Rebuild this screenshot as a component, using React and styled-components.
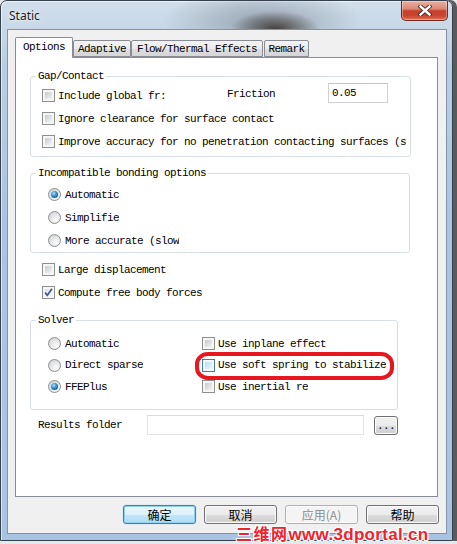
import React from "react";
import styled, { createGlobalStyle } from "styled-components";

const MONO = `"Liberation Mono", "Courier New", monospace`;
const CJK = `"Noto Sans CJK SC", "Noto Sans", sans-serif`;

const GlobalStyle = createGlobalStyle`
  html, body {
    margin: 0;
    padding: 0;
  }
  body {
    width: 457px;
    height: 544px;
    overflow: hidden;
    background: #e6e9ec;
  }
`;

const Screen = styled.div`
  position: relative;
  width: 457px;
  height: 544px;
`;

const Window = styled.div`
  box-sizing: border-box;
  width: 453px;
  height: 541px;
  border: 1px solid #36414e;
  border-radius: 7px 7px 0 0;
  background: linear-gradient(180deg, #d2dfeb 0%, #b9cee3 12%, #a9c5e3 40%, #a8c4e2 100%);
  padding: 0 5px 6px 6px;
  box-shadow: 4px 0 0 #5a5a5a, inset 1px 1px 0 rgba(255, 255, 255, 0.6);
  display: flex;
  flex-direction: column;
`;

const TitleBar = styled.div`
  height: 28px;
  display: flex;
  align-items: flex-start;
  background: radial-gradient(ellipse 45px 18px at 61% 100%, rgba(60, 52, 46, 0.9), rgba(60, 52, 46, 0) 100%),
    radial-gradient(ellipse 100px 32px at 58% 70%, rgba(100, 110, 122, 0.5), rgba(100, 110, 122, 0) 100%);
`;

const Title = styled.span`
  margin: 7px 0 0 2px;
  font-family: "Noto Sans", "Liberation Sans", sans-serif;
  font-size: 12px;
  line-height: 16px;
  color: #1b1b1b;
  text-shadow: 0 0 6px rgba(255, 255, 255, 0.9), 0 0 2px rgba(255, 255, 255, 0.8);
`;

const CloseButton = styled.div`
  box-sizing: border-box;
  width: 47px;
  height: 20px;
  margin-left: auto;
  margin-right: -1px;
  border: 1px solid #6e2a22;
  border-top: none;
  border-radius: 0 0 5px 5px;
  background: linear-gradient(180deg, #eab0a2 0%, #dc8670 42%, #c6412b 52%, #c94530 78%, #de7452 100%);
  box-shadow: inset 0 0 0 1px rgba(255, 255, 255, 0.35);
  display: flex;
  align-items: center;
  justify-content: center;
`;

const Body = styled.div`
  box-sizing: border-box;
  flex: 1;
  border: 1px solid #8494a5;
  background: #f0f0f0;
  padding: 7px 7px 9px 7px;
  display: flex;
  flex-direction: column;
`;

const TabStrip = styled.div`
  position: relative;
  z-index: 1;
  height: 20px;
  display: flex;
  align-items: flex-end;
`;

const Tab = styled.div`
  box-sizing: border-box;
  width: ${(p) => p.$w}px;
  margin-left: ${(p) => p.$ml || 0}px;
  height: ${(p) => (p.$active ? 21 : 17)}px;
  margin-bottom: ${(p) => (p.$active ? -1 : 0)}px;
  border: 1px solid #898c95;
  border-bottom: ${(p) => (p.$active ? "none" : "1px solid #898c95")};
  border-radius: 2px 2px 0 0;
  background: ${(p) =>
    p.$active ? "#ffffff" : "linear-gradient(180deg, #f3f3f3 0%, #ebebeb 50%, #dddddd 51%, #d6d6d6 100%)"};
  display: flex;
  justify-content: center;
  padding-top: ${(p) => (p.$active ? 3 : 2)}px;
  font-family: ${MONO};
  font-size: 11px;
  letter-spacing: -0.6px;
  line-height: 13px;
  color: #000;
`;

const Panel = styled.div`
  position: relative;
  box-sizing: border-box;
  width: 423px;
  height: 440px;
  border: 1px solid #898c95;
  background: #ffffff;
  display: flex;
  flex-direction: column;
`;

const GroupBox = styled.fieldset`
  box-sizing: border-box;
  width: ${(p) => p.$w}px;
  margin: ${(p) => p.$mt}px 0 0 14px;
  padding: 0;
  border: 1px solid #d5dfe5;
  border-radius: 3px;
  min-inline-size: 0;
`;

const Legend = styled.legend`
  margin-left: 5px;
  padding: 0 2px;
  font-family: ${MONO};
  font-size: 11px;
  letter-spacing: -0.6px;
  line-height: 14px;
  color: #000;
`;

const GroupBody = styled.div`
  padding: ${(p) => p.$pad};
`;

const Row = styled.div`
  display: flex;
  align-items: center;
  height: ${(p) => p.$h || 23}px;
  gap: ${(p) => p.$gap ?? 3}px;
`;

const Label = styled.span`
  font-family: ${MONO};
  font-size: 11px;
  letter-spacing: -0.6px;
  line-height: 14px;
  color: ${(p) => p.$color || "#000"};
  white-space: nowrap;
  overflow: hidden;
  flex: none;
  ${(p) => (p.$w ? `width: ${p.$w}px;` : "")}
  ${(p) => (p.$clip ? `max-width: ${p.$clip}px;` : "")}
  ${(p) => (p.$mt ? `margin-top: ${p.$mt}px;` : "")}
`;

const CheckBox = styled.span`
  position: relative;
  box-sizing: border-box;
  flex: none;
  width: 13px;
  height: 13px;
  border: 1px solid ${(p) => (p.$hot ? "#3c7fb1" : "#8e8f8f")};
  background: #f6f6f6;
  &::after {
    content: "";
    position: absolute;
    inset: 2px;
    background: ${(p) =>
      p.$hot
        ? "linear-gradient(135deg, #b3dbf3 0%, #d3ebfa 55%, #eaf6fd 100%)"
        : p.$checked
        ? "linear-gradient(135deg, #dadcdf 0%, #eeeff0 55%, #fafafa 100%)"
        : "linear-gradient(135deg, #c6cacf 0%, #dfe1e3 55%, #f4f4f4 100%)"};
  }
  svg {
    position: absolute;
    left: 0;
    top: 0;
    z-index: 1;
  }
`;

const Radio = styled.span`
  position: relative;
  box-sizing: border-box;
  flex: none;
  width: 13px;
  height: 13px;
  border-radius: 50%;
  border: 1px solid #8e8f8f;
  background: radial-gradient(circle at 65% 70%, #fbfbfb 0%, #e6e7e9 45%, #c9ccd1 100%);
  &::after {
    content: "";
    display: ${(p) => (p.$on ? "block" : "none")};
    position: absolute;
    left: 2px;
    top: 2px;
    width: 7px;
    height: 7px;
    border-radius: 50%;
    background: radial-gradient(circle at 40% 35%, #a9e2fb 0%, #3b96d6 40%, #1c5a94 75%, #153c63 100%);
  }
`;

const TextBox = styled.div`
  box-sizing: border-box;
  flex: none;
  width: ${(p) => p.$w}px;
  height: 20px;
  border: 1px solid ${(p) => p.$border || "#cfd1d4"};
  border-top-color: ${(p) => p.$top || "#c2c4c8"};
  background: #fff;
  padding-left: 3px;
  display: flex;
  align-items: center;
  ${(p) => (p.$mt ? `margin-top: ${p.$mt}px;` : "")}
`;

const PlainRows = styled.div`
  margin-top: 5px;
  padding-left: 26px;
`;

const SolverGrid = styled.div`
  display: grid;
  grid-template-columns: 154px auto;
  grid-template-rows: 21px 22px 21px;
`;

const Highlight = styled.svg`
  position: absolute;
  left: 179px;
  top: 294px;
`;

const ResultsRow = styled.div`
  margin-top: 5px;
  padding-left: 22px;
  display: flex;
  align-items: center;
  height: 20px;
`;

const SmallButton = styled.div`
  box-sizing: border-box;
  flex: none;
  width: 24px;
  height: 19px;
  margin-left: 10px;
  margin-top: 1px;
  border: 1px solid #707070;
  border-radius: 3px;
  background: linear-gradient(180deg, #f2f2f2 0%, #ebebeb 50%, #dddddd 51%, #cfcfcf 100%);
  box-shadow: inset 0 0 0 1px #fcfcfc;
  display: flex;
  justify-content: center;
  padding-top: 3px;
  font-family: ${MONO};
  font-size: 11px;
  letter-spacing: -0.6px;
  line-height: 12px;
`;

const ButtonRow = styled.div`
  margin-top: 8px;
  display: flex;
  justify-content: flex-end;
  gap: 8px;
`;

const DialogButton = styled.div`
  box-sizing: border-box;
  width: 73px;
  height: 19px;
  border-radius: 3px;
  display: flex;
  align-items: center;
  justify-content: center;
  font-family: ${CJK};
  font-size: 12px;
  line-height: 17px;
  border: 1px solid ${(p) => (p.$default ? "#3c7fb1" : p.$disabled ? "#adb2b5" : "#707070")};
  color: ${(p) => (p.$disabled ? "#8d8d8d" : "#000")};
  background: ${(p) =>
    p.$default
      ? "linear-gradient(180deg, #ebf6fd 0%, #dcf1fc 50%, #c4e6f8 51%, #b0dbf3 100%)"
      : p.$disabled
      ? "#f4f4f4"
      : "linear-gradient(180deg, #f2f2f2 0%, #ebebeb 50%, #dddddd 51%, #cfcfcf 100%)"};
  box-shadow: ${(p) =>
    p.$default ? "inset 0 0 0 1px #8fd1f5, 0 0 1px #5fb3e8" : "inset 0 0 0 1px #fbfbfb"};
`;

const Watermark = styled.div`
  position: absolute;
  left: 236px;
  top: 526px;
  display: flex;
  align-items: baseline;
  color: #f0232c;
  font-weight: bold;
  white-space: nowrap;
  text-shadow: 1px 0 0 #fff, -1px 0 0 #fff, 0 1px 0 #fff, 0 -1px 0 #fff, 1px 1px 0 #fff,
    -1px -1px 0 #fff, 1px -1px 0 #fff, -1px 1px 0 #fff;
`;

const MarkCJK = styled.span`
  font-family: ${CJK};
  font-size: 16px;
  line-height: 14px;
  letter-spacing: 1.5px;
`;

const MarkLatin = styled.span`
  font-family: "Liberation Sans", Arial, sans-serif;
  font-size: 17px;
  line-height: 14px;
  letter-spacing: 0.3px;
`;

const CheckMark = () => (
  <svg width="11" height="11" viewBox="0 0 11 11">
    <path d="M2 5.5 L4.3 8.3 L9 1.8" fill="none" stroke="#3b5a9c" strokeWidth="1.7" />
  </svg>
);

const CheckItem = ({ children, checked, hot, ...rest }) => (
  <Row>
    <CheckBox $checked={checked} $hot={hot}>
      {checked && <CheckMark />}
    </CheckBox>
    <Label {...rest}>{children}</Label>
  </Row>
);

const RadioItem = ({ children, on, h, ...rest }) => (
  <Row $gap={4} $h={h}>
    <Radio $on={on} />
    <Label {...rest}>{children}</Label>
  </Row>
);

export default function App() {
  return (
    <Screen>
      <GlobalStyle />
      <Window>
        <TitleBar>
          <Title>Static</Title>
          <CloseButton>
            <svg width="14" height="11" viewBox="0 0 14 11">
              <path d="M2.5 1.5 L11.5 9.5 M11.5 1.5 L2.5 9.5" stroke="#3d2b28" strokeWidth="4.2" strokeLinecap="square" />
              <path d="M2.5 1.5 L11.5 9.5 M11.5 1.5 L2.5 9.5" stroke="#ffffff" strokeWidth="2.4" strokeLinecap="square" />
            </svg>
          </CloseButton>
        </TitleBar>
        <Body>
          <TabStrip>
            <Tab $active $w={58}>Options</Tab>
            <Tab $w={58}>Adaptive</Tab>
            <Tab $w={132}>Flow/Thermal Effects</Tab>
            <Tab $w={45} $ml={1}>Remark</Tab>
          </TabStrip>
          <Panel>
            <GroupBox $w={381} $mt={11}>
              <Legend>Gap/Contact</Legend>
              <GroupBody $pad="1px 0 3px 11px">
                <Row>
                  <CheckBox />
                  <Label $w={166}>Include global fr:</Label>
                  <Label $w={98} $mt={-3}>Friction</Label>
                  <TextBox $w={60} $mt={-5}>
                    <Label>0.05</Label>
                  </TextBox>
                </Row>
                <CheckItem>Ignore clearance for surface contact</CheckItem>
                <CheckItem $clip={349}>Improve accuracy for no penetration contacting surfaces (s</CheckItem>
              </GroupBody>
            </GroupBox>

            <GroupBox $w={380} $mt={9}>
              <Legend>Incompatible bonding options</Legend>
              <GroupBody $pad="3px 0 0 17px">
                <RadioItem on>Automatic</RadioItem>
                <RadioItem>Simplifie</RadioItem>
                <RadioItem>More accurate (slow</RadioItem>
              </GroupBody>
            </GroupBox>

            <PlainRows>
              <CheckItem>Large displacement</CheckItem>
              <CheckItem checked>Compute free body forces</CheckItem>
            </PlainRows>

            <GroupBox $w={368} $mt={9}>
              <Legend>Solver</Legend>
              <GroupBody $pad="6px 0 12px 17px">
                <SolverGrid>
                  <RadioItem h={21}>Automatic</RadioItem>
                  <Row $h={21}>
                    <CheckBox />
                    <Label>Use inplane effect</Label>
                  </Row>
                  <RadioItem h={22}>Direct sparse</RadioItem>
                  <Row $h={22}>
                    <CheckBox $hot />
                    <Label>Use soft spring to stabilize</Label>
                  </Row>
                  <RadioItem h={21} on>FFEPlus</RadioItem>
                  <Row $h={21}>
                    <CheckBox />
                    <Label>Use inertial re</Label>
                  </Row>
                </SolverGrid>
              </GroupBody>
            </GroupBox>

            <ResultsRow>
              <Label $w={109}>Results folder</Label>
              <TextBox $w={217} $border="#e3e4e8" $top="#d9dadd" />
              <SmallButton>...</SmallButton>
            </ResultsRow>

            <Highlight width="199" height="28" viewBox="0 0 199 28">
              <rect x="2" y="2" width="195" height="24" rx="11" ry="10" fill="none" stroke="#e8161f" strokeWidth="4" />
            </Highlight>
          </Panel>
          <ButtonRow>
            <DialogButton $default>确定</DialogButton>
            <DialogButton>取消</DialogButton>
            <DialogButton $disabled>应用(A)</DialogButton>
            <DialogButton>帮助</DialogButton>
          </ButtonRow>
        </Body>
      </Window>
      <Watermark>
        <MarkCJK>三维网</MarkCJK>
        <MarkLatin>www.3dportal.cn</MarkLatin>
      </Watermark>
    </Screen>
  );
}
